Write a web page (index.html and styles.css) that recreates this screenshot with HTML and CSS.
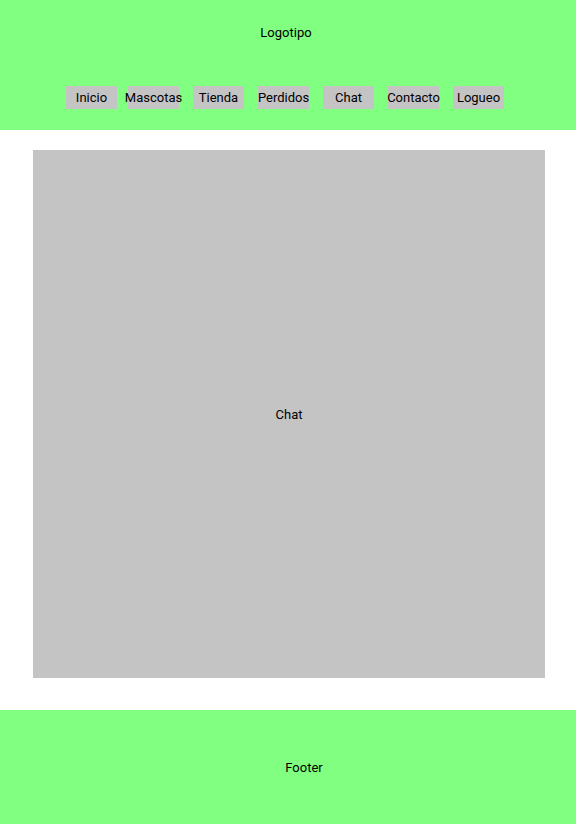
FILE: index.html
```html
<!DOCTYPE html>
<html lang="es">
<head>
<meta charset="utf-8">
<title>Chat</title>
<link rel="stylesheet" href="styles.css">
</head>
<body>
<header class="header">
  <div class="logo">Logotipo</div>
  <nav class="nav">
    <a class="nav-item nav-item-first">Inicio</a>
    <a class="nav-item">Mascotas</a>
    <a class="nav-item">Tienda</a>
    <a class="nav-item">Perdidos</a>
    <a class="nav-item">Chat</a>
    <a class="nav-item">Contacto</a>
    <a class="nav-item">Logueo</a>
  </nav>
</header>
<main class="main">
  <section class="chat">Chat</section>
</main>
<footer class="footer">Footer</footer>
</body>
</html>
```
FILE: styles.css
```css
* { box-sizing: border-box; }
html, body { margin: 0; padding: 0; }
body {
  font-family: Roboto, "Liberation Sans", sans-serif;
  font-size: 13px;
  color: #000;
  background: #fff;
}
.header {
  background: #80ff80;
  height: 130px;
  padding-top: 24px;
}
.logo {
  text-align: center;
  line-height: 18px;
  padding-right: 4px;
}
.nav {
  display: flex;
  justify-content: flex-start;
  gap: 14px;
  margin-top: 44px;
  padding-left: 66px;
}
.nav-item {
  width: 51px;
  height: 23px;
  background: #c4c4c4;
  display: flex;
  align-items: center;
  justify-content: center;
  white-space: nowrap;
}
.nav-item-first {
  margin-right: -3px;
}
.main {
  padding: 20px 31px 32px 33px;
}
.chat {
  background: #c4c4c4;
  height: 528px;
  display: flex;
  align-items: center;
  justify-content: center;
}
.footer {
  background: #80ff80;
  height: 114px;
  display: flex;
  align-items: center;
  justify-content: center;
  padding-left: 32px;
}
```
